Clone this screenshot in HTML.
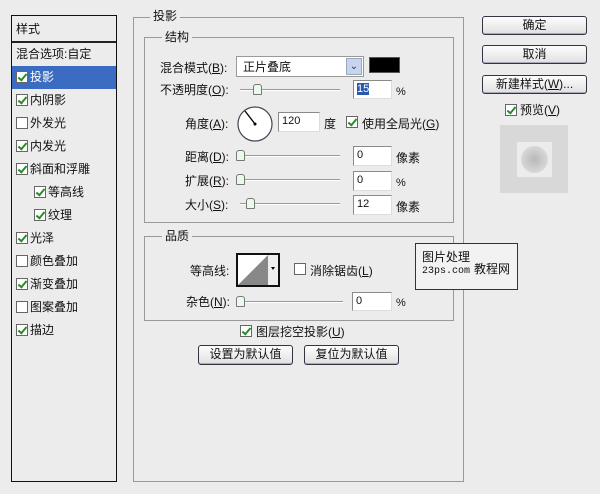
<!DOCTYPE html>
<html><head><meta charset="utf-8"><style>
*{margin:0;padding:0;box-sizing:border-box}
body{width:600px;height:494px;background:#ececec;position:relative;overflow:hidden;font-family:"Liberation Sans","Noto Sans CJK SC","WenQuanYi Zen Hei",sans-serif;font-size:12px;color:#111}
.a{position:absolute;white-space:nowrap;line-height:14px}
.box{position:absolute;border:1px solid #999}
.inp{position:absolute;background:#fff;border:1px solid #8a8a8a;border-right-color:#ddd;border-bottom-color:#ddd;font-size:11px;padding:2px 3px;line-height:13px}
.cb{position:absolute;width:12px;height:12px;border:1px solid #666;background:#fff}
.cb.on::after{content:"";position:absolute;left:3px;top:0px;width:3px;height:7px;border:solid #2a8a2a;border-width:0 2px 2px 0;transform:rotate(40deg)}
.sl{position:absolute;height:2px;border-top:1px solid #999;border-bottom:1px solid #fff}
.th{position:absolute;width:9px;height:11px;border:1px solid #777;background:#eafaea;border-radius:3px 3px 1px 1px}
.btn{position:absolute;border:1px solid #334;border-radius:3px;background:linear-gradient(#fdfdfd,#e0e0e0);text-align:center;line-height:17px;box-shadow:inset 0 -1px #aab}
.row{position:absolute;left:1px;width:105px;height:23px;border-bottom:1px solid #f6f6f6}
.sep{position:absolute;background:#ececec;padding:0 3px}
</style></head><body>
<!-- left panel -->
<div style="position:absolute;left:11px;top:15px;width:106px;height:467px;border:1px solid #111;background:#ececec">
 <div class="a" style="left:4px;top:6px">样式</div>
 <div style="position:absolute;left:0;top:25px;width:104px;border-top:2px solid #222"></div>
 <div class="a" style="left:4px;top:31px">混合选项:自定</div>
 <div style="position:absolute;left:0;top:50px;width:104px;height:23px;background:#3b6cc1"></div>
 <div class="cb on" style="left:4px;top:55px"></div><div class="a" style="left:18px;top:54px;color:#fff">投影</div>
 <div class="cb on" style="left:4px;top:78px"></div><div class="a" style="left:18px;top:77px">内阴影</div>
 <div class="cb" style="left:4px;top:101px"></div><div class="a" style="left:18px;top:100px">外发光</div>
 <div class="cb on" style="left:4px;top:124px"></div><div class="a" style="left:18px;top:123px">内发光</div>
 <div class="cb on" style="left:4px;top:147px"></div><div class="a" style="left:18px;top:146px">斜面和浮雕</div>
 <div class="cb on" style="left:22px;top:170px"></div><div class="a" style="left:36px;top:169px">等高线</div>
 <div class="cb on" style="left:22px;top:193px"></div><div class="a" style="left:36px;top:192px">纹理</div>
 <div class="cb on" style="left:4px;top:216px"></div><div class="a" style="left:18px;top:215px">光泽</div>
 <div class="cb" style="left:4px;top:239px"></div><div class="a" style="left:18px;top:238px">颜色叠加</div>
 <div class="cb on" style="left:4px;top:262px"></div><div class="a" style="left:18px;top:261px">渐变叠加</div>
 <div class="cb" style="left:4px;top:285px"></div><div class="a" style="left:18px;top:284px">图案叠加</div>
 <div class="cb on" style="left:4px;top:308px"></div><div class="a" style="left:18px;top:307px">描边</div>
</div>
<!-- outer group -->
<div class="box" style="left:133px;top:17px;width:331px;height:465px"></div>
<div class="sep a" style="left:150px;top:9px">投影</div>
<div class="box" style="left:144px;top:37px;width:310px;height:186px"></div>
<div class="sep a" style="left:162px;top:30px">结构</div>
<div class="a" style="left:160px;top:61px">混合模式(<u>B</u>):</div>
<div style="position:absolute;left:236px;top:56px;width:128px;height:21px;background:#fff;border:1px solid #999"><span class="a" style="left:6px;top:3px">正片叠底</span><div style="position:absolute;right:1px;top:1px;width:16px;height:17px;background:#c6d4ee;border:1px solid #9ab;color:#335;font-size:10px;text-align:center;line-height:16px">⌄</div></div>
<div style="position:absolute;left:369px;top:57px;width:31px;height:16px;background:#000;border:1px solid #555"></div>
<div class="a" style="left:160px;top:83px">不透明度(<u>O</u>):</div>
<div class="sl" style="left:240px;top:89px;width:100px"></div><div class="th" style="left:253px;top:84px"></div>
<div class="inp" style="left:353px;top:80px;width:39px;height:19px"><span style="background:#2a58b0;color:#fff">15</span></div>
<div class="a" style="left:396px;top:85px;font-size:11px">%</div>
<div class="a" style="left:185px;top:117px">角度(<u>A</u>):</div>
<svg style="position:absolute;left:236px;top:105px" width="40" height="40"><circle cx="19" cy="19" r="17" fill="#fff" stroke="#445" stroke-width="1.2"/><line x1="19" y1="19" x2="9" y2="6" stroke="#000" stroke-width="1.3"/><circle cx="19" cy="19" r="1.5"/></svg>
<div class="inp" style="left:278px;top:112px;width:42px;height:20px">120</div>
<div class="a" style="left:324px;top:117px">度</div>
<div class="cb on" style="left:346px;top:116px"></div>
<div class="a" style="left:362px;top:117px">使用全局光(<u>G</u>)</div>
<div class="a" style="left:185px;top:150px">距离(<u>D</u>):</div>
<div class="sl" style="left:238px;top:155px;width:102px"></div><div class="th" style="left:236px;top:150px"></div>
<div class="inp" style="left:353px;top:146px;width:39px;height:20px">0</div><div class="a" style="left:396px;top:151px">像素</div>
<div class="a" style="left:185px;top:174px">扩展(<u>R</u>):</div>
<div class="sl" style="left:238px;top:179px;width:102px"></div><div class="th" style="left:236px;top:174px"></div>
<div class="inp" style="left:353px;top:171px;width:39px;height:20px">0</div><div class="a" style="left:396px;top:176px;font-size:11px">%</div>
<div class="a" style="left:185px;top:198px">大小(<u>S</u>):</div>
<div class="sl" style="left:240px;top:203px;width:100px"></div><div class="th" style="left:246px;top:198px"></div>
<div class="inp" style="left:353px;top:195px;width:39px;height:20px">12</div><div class="a" style="left:396px;top:200px">像素</div>
<!-- quality -->
<div class="box" style="left:144px;top:236px;width:310px;height:85px"></div>
<div class="sep a" style="left:162px;top:229px">品质</div>
<div class="a" style="left:190px;top:264px">等高线:</div>
<div style="position:absolute;left:236px;top:253px;width:44px;height:34px;border:2px solid #111;background:#fff"><svg width="40" height="30" style="position:absolute;left:0;top:0"><polygon points="0,30 30,0 30,30" fill="#888"/><rect x="30" y="0" width="10" height="30" fill="#eee"/><polygon points="33,12 37,12 35,15" fill="#000"/></svg></div>
<div class="cb" style="left:294px;top:263px"></div>
<div class="a" style="left:310px;top:264px">消除锯齿(<u>L</u>)</div>
<div class="a" style="left:186px;top:295px">杂色(<u>N</u>):</div>
<div class="sl" style="left:240px;top:301px;width:103px"></div><div class="th" style="left:236px;top:296px"></div>
<div class="inp" style="left:352px;top:292px;width:40px;height:19px">0</div><div class="a" style="left:396px;top:296px;font-size:11px">%</div>
<!-- watermark -->
<div style="position:absolute;left:415px;top:243px;width:103px;height:47px;border:1px solid #333;background:#f2f2f2"></div>
<div class="a" style="left:422px;top:250px">图片处理</div>
<div class="a" style="left:422px;top:265px;font-family:'Liberation Mono',monospace;font-size:10px">23ps.com</div>
<div class="a" style="left:474px;top:262px">教程网</div>
<div class="cb on" style="left:240px;top:325px"></div>
<div class="a" style="left:256px;top:325px">图层挖空投影(<u>U</u>)</div>
<div class="btn" style="left:198px;top:345px;width:95px;height:20px">设置为默认值</div>
<div class="btn" style="left:304px;top:345px;width:95px;height:20px">复位为默认值</div>
<!-- right -->
<div class="btn" style="left:482px;top:16px;width:105px;height:19px">确定</div>
<div class="btn" style="left:482px;top:45px;width:105px;height:19px">取消</div>
<div class="btn" style="left:482px;top:75px;width:105px;height:19px">新建样式(<u>W</u>)...</div>
<div class="cb on" style="left:505px;top:104px"></div>
<div class="a" style="left:520px;top:103px">预览(<u>V</u>)</div>
<div style="position:absolute;left:500px;top:125px;width:68px;height:68px;background:#d8d8d8"></div>
<div style="position:absolute;left:517px;top:142px;width:35px;height:35px;background:#ececec"></div>
<div style="position:absolute;left:521px;top:146px;width:27px;height:27px;border-radius:50%;background:radial-gradient(#b8b8b8,#d8d8d8 70%,#e6e6e6)"></div>
</body></html>
